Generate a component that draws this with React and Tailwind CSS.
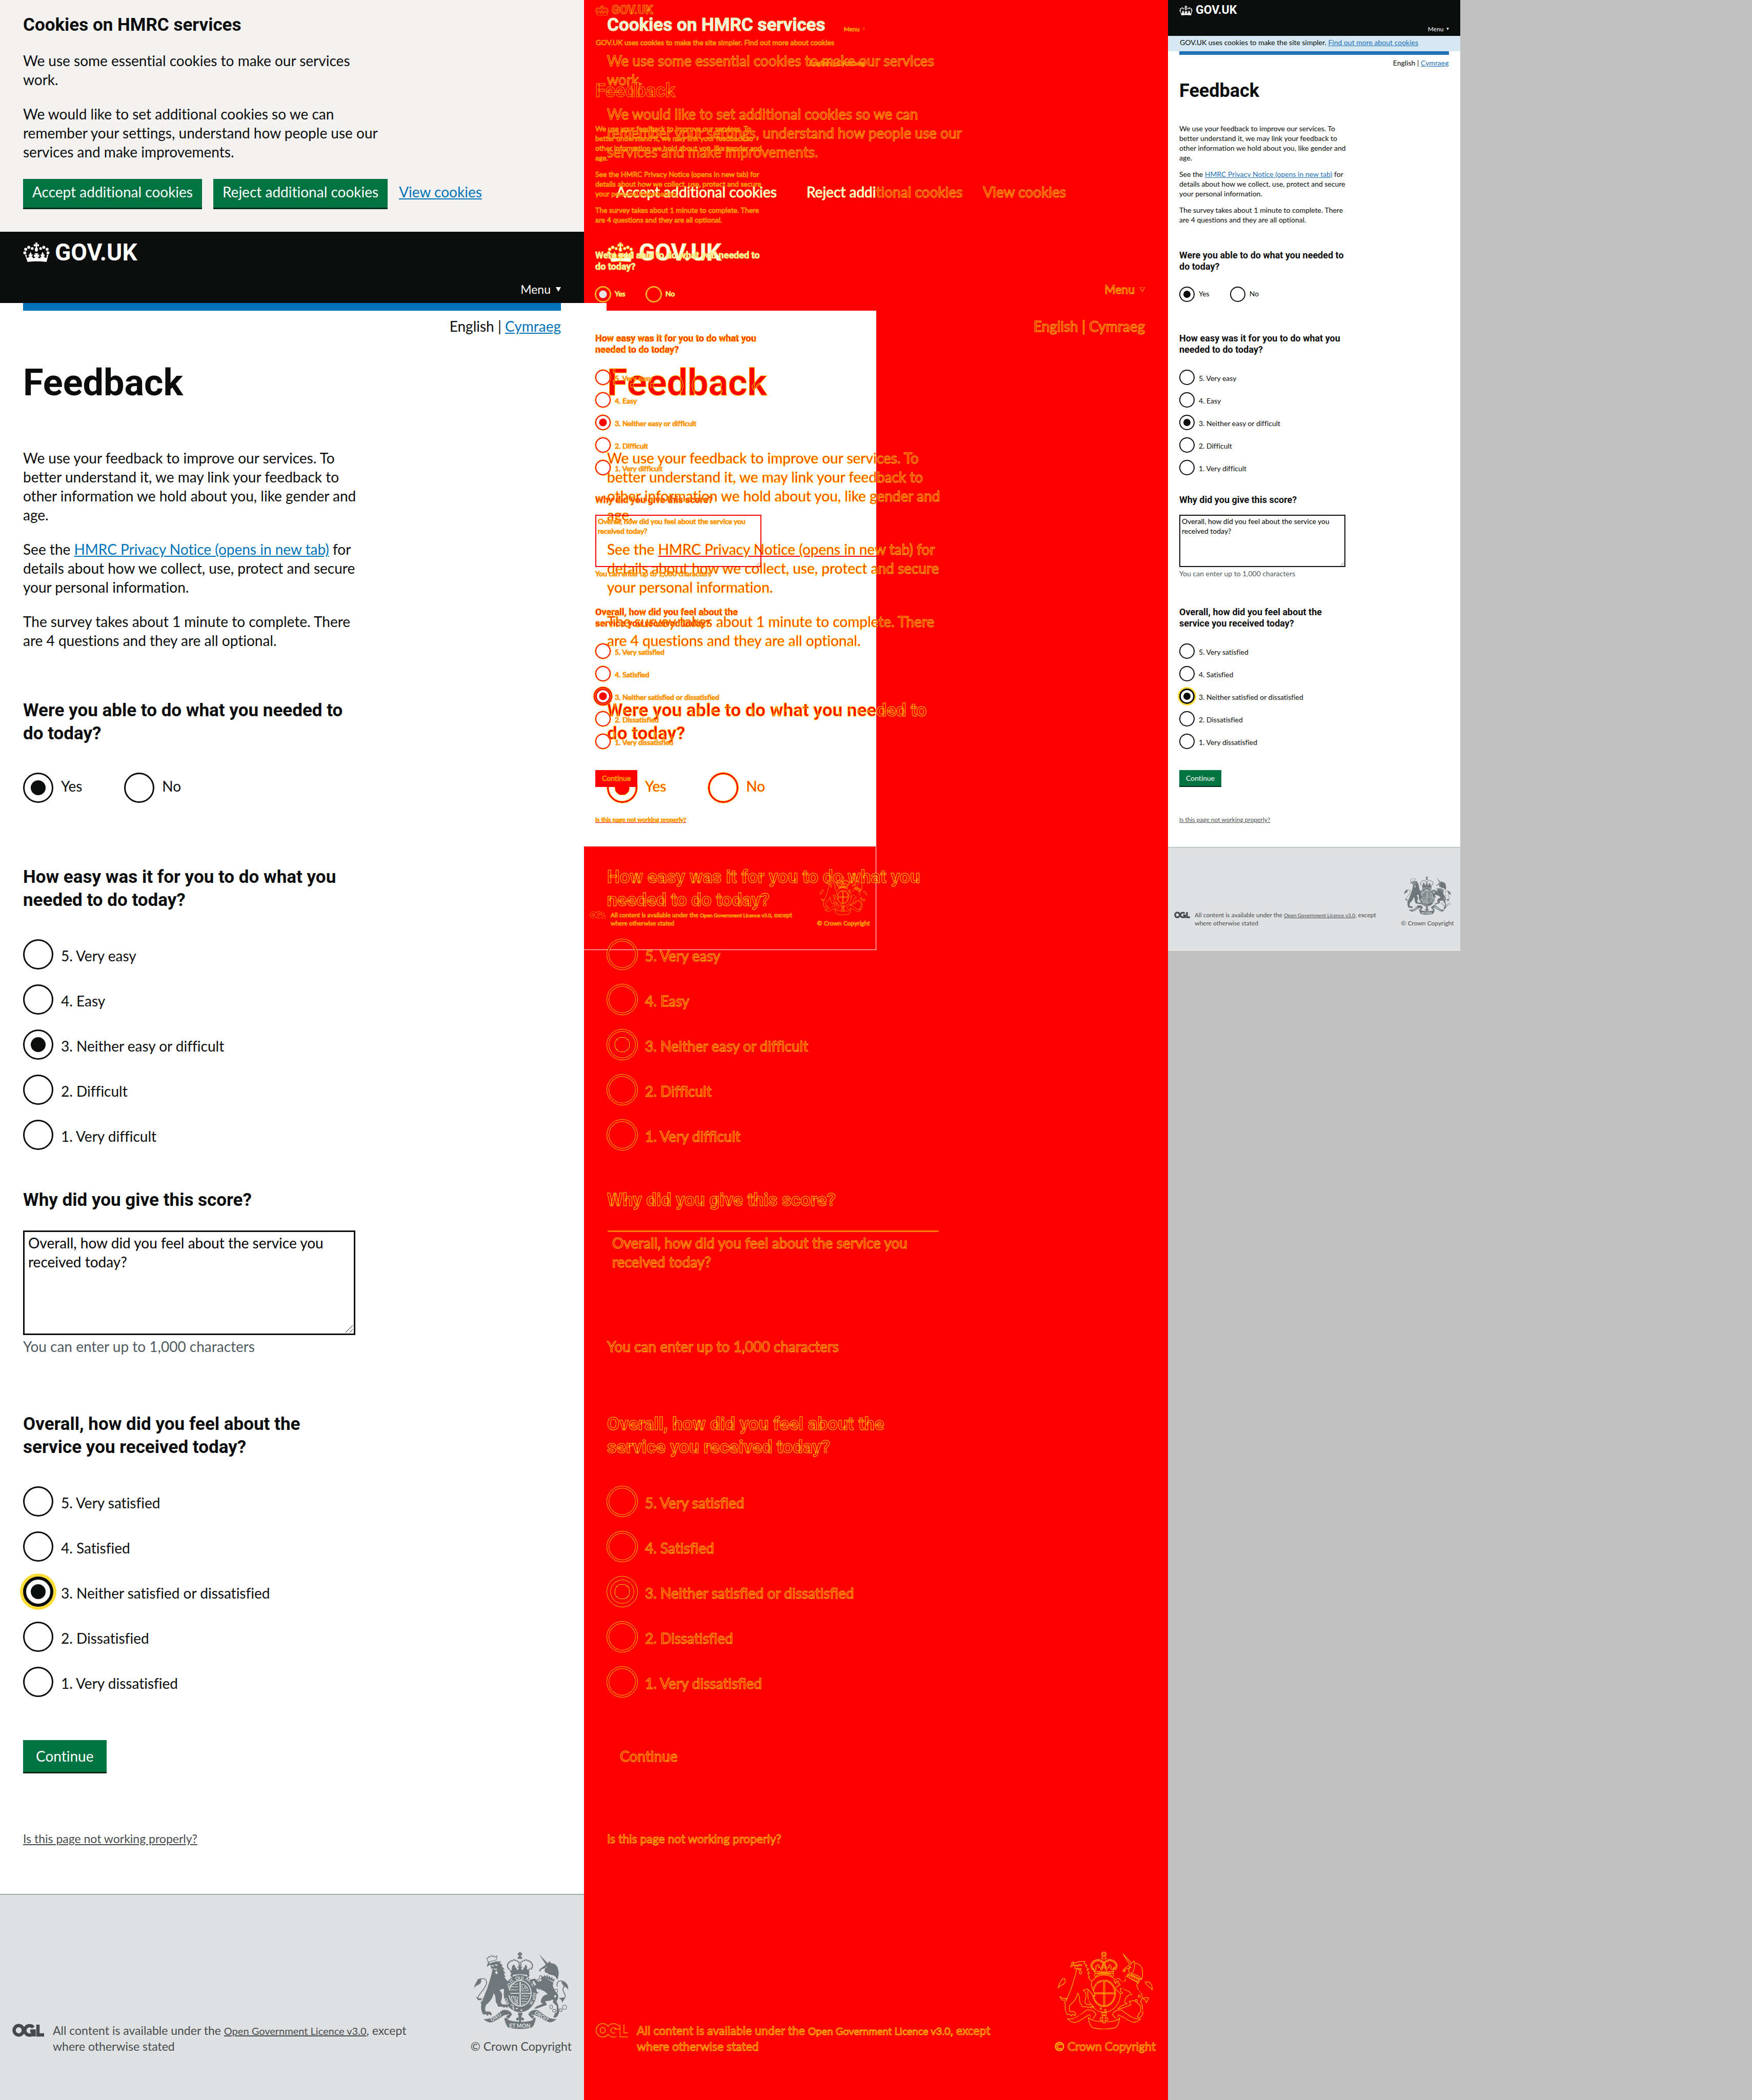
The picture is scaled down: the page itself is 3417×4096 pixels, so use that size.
import { useId } from "react";

/* Sizes of the wide (2x) rendering and of the narrow (1x) rendering of the page. */
const large = {
  gutter: "px-[45px]",
  header: "h-[139px] px-[45px] pt-[12px] pb-[12px]",
  logoRow: "h-[56px] gap-[10px]",
  crown: "w-[52px] h-[38px]",
  logo: "text-[46px] leading-[56px]",
  menu: "text-[23px] leading-[30px] gap-[10px]",
  arrow: "w-[10px] h-[9px]",
  bar: "h-[15px]",
  body: "text-[28px] leading-[37px]",
  lang: "mt-[12px]",
  h1: "text-[72px] leading-[76px] mt-[54px] mb-[90px]",
  paras: "gap-[30px]",
  h2: "text-[35px] leading-[45px]",
  q1: "mt-[95px]",
  q2: "mt-[122px]",
  q3: "mt-[75px]",
  q4: "mt-[110px]",
  options: "mt-[54px]",
  inline: "gap-[82px]",
  stacked: "gap-[29px]",
  label: "gap-[15px]",
  labelUp: "pb-[6px]",
  labelDown: "pt-[6px]",
  radio: "size-[59px]",
  radioIdle: "border-[3px] p-[12px]",
  radioFocus: "border-[6px] p-[9px]",
  area: "mt-[37px] w-[648px] h-[204px]",
  areaBox: "border-[3px] px-[7px] py-[3px]",
  grip: "w-[16px] h-[16px] right-[4px] bottom-[4px]",
  hint: "mt-[4px]",
  cont: "mt-[84px] h-[65px] px-[25px] border-b-[3px]",
  problem: "mt-[112px] mb-[93px] text-[23px] leading-[30px]",
  footer: "border-t-2 px-[24px] pt-[111px] pb-[91px] text-[23px] leading-[30px]",
  ogl: "w-[62px] h-[30px]",
  oglRow: "gap-[17px]",
  footLink: "text-[20px]",
  crest: "w-[185px] h-[151px] mb-[18px]",
};

const small = {
  gutter: "px-[22px]",
  header: "h-[70px] px-[22px] pt-[6px] pb-[6px]",
  logoRow: "h-[28px] gap-[6px]",
  crown: "w-[26px] h-[19px]",
  logo: "text-[23px] leading-[28px]",
  menu: "text-[12px] leading-[15px] gap-[5px]",
  arrow: "w-[5px] h-[5px]",
  bar: "h-[7px]",
  body: "text-[14px] leading-[19px]",
  lang: "mt-[6px]",
  h1: "text-[36px] leading-[38px] mt-[26px] mb-[45px]",
  paras: "gap-[13px]",
  h2: "text-[18px] leading-[22px]",
  q1: "mt-[49px]",
  q2: "mt-[60px]",
  q3: "mt-[37px]",
  q4: "mt-[55px]",
  options: "mt-[28px]",
  inline: "gap-[40px]",
  stacked: "gap-[14px]",
  label: "gap-[8px]",
  labelUp: "pb-[3px]",
  labelDown: "pt-[2px]",
  radio: "size-[30px]",
  radioIdle: "border-2 p-[6px]",
  radioFocus: "border-[3px] p-[5px]",
  area: "mt-[18px] w-[324px] h-[102px]",
  areaBox: "border-2 px-[3px] py-[1px]",
  grip: "w-[8px] h-[8px] right-[2px] bottom-[2px]",
  hint: "mt-[3px]",
  cont: "mt-[41px] h-[33px] px-[13px] border-b-2",
  problem: "mt-[56px] mb-[46px] text-[12px] leading-[15px]",
  footer: "border-t px-[12px] pt-[56px] pb-[45px] text-[12px] leading-[15px]",
  ogl: "w-[31px] h-[15px]",
  oglRow: "gap-[9px]",
  footLink: "text-[10px]",
  crest: "w-[92px] h-[76px] mb-[8px]",
};

const plain = {
  root: "bg-white text-[#0b0c0c]",
  banner: "bg-[#f3f2f1]",
  title: "",
  accept: "bg-[#007343] border-[#002d18] text-white",
  header: "bg-[#0b0c0c] text-white",
  logo: "",
  notice: "bg-[#d5e8f3]",
  first: "",
  hint: "text-[#505a5f]",
  radio: "border-[#0b0c0c] bg-white bg-clip-content checked:bg-[#0b0c0c]",
  area: "border-[#0b0c0c] bg-white text-black",
  cont: "bg-[#007343] border-[#002d18] text-white",
  problem: "text-[#484c4e]",
  footer: "bg-[#dee0e2] border-[#9cafae] text-[#484c4e]",
  ogl: "text-[#454a4d]",
  crest: "text-[#6f777b]",
  cut: "#dee0e2",
};

const largePage = {
  ...plain,
  link: "text-[#0072b8]",
  bar: "bg-[#0072b8]",
  focus: "shadow-[0_0_0_6px_#ffdd38]",
};

const smallPage = {
  ...plain,
  link: "text-[#1d70b8]",
  bar: "bg-[#1f70b8]",
  focus: "shadow-[0_0_0_3px_#ffdd38]",
};

const largeDiff = {
  root: "text-[#ff0000] [-webkit-text-stroke:1px_#ffc400]",
  banner: "",
  title: "text-[#ececec] [-webkit-text-stroke:1px_#ffff9a]",
  accept: "border-transparent text-white [-webkit-text-stroke:1px_#ffff9a]",
  half: "text-[#ff0000] [-webkit-text-stroke:1px_#ffc400]",
  header: "",
  logo: "text-white [-webkit-text-stroke:1px_#ffe060]",
  notice: "",
  first: "",
  hint: "",
  link: "decoration-[#ff0000]",
  bar: "",
  radio:
    "border-[#ff0000] outline-1 outline-[#ffc400] shadow-[inset_0_0_0_1px_#ffc400] checked:bg-[radial-gradient(circle,#ff0000_0_14px,#ffc400_14px_15px,transparent_15px)]",
  focus: "shadow-[inset_0_0_0_1px_#ffc400,0_0_0_5px_#ff0000,0_0_0_6px_#ffc400]",
  area: "border-transparent border-t-[#ff8000]",
  cont: "border-transparent",
  problem: "decoration-[#ff0000]",
  footer: "border-transparent",
  ogl: "text-[#ff0000]",
  crest: "text-[#ff0000] stroke-[#ffb400] [stroke-width:5px]",
  cut: "#ff0000",
  edge: "#ffb800",
};

const smallDiff = {
  ...largeDiff,
  root: "text-[#ff0000] [-webkit-text-stroke:1px_#ff9a00]",
  logo: "text-[#ff0000] [-webkit-text-stroke:1px_#ffb000]",
  first: "text-[#ececec] [-webkit-text-stroke:1px_#ffee60]",
  radio:
    "border-[#ff0000] outline-1 outline-[#ffb000] checked:bg-[radial-gradient(circle,#ff0000_0_7px,transparent_8px)]",
  radioFirst:
    "border-[#ff9a00] outline-1 outline-[#ffff60] checked:bg-[radial-gradient(circle,#e5e5e5_0_7px,transparent_8px)]",
  focus: "shadow-[0_0_0_3px_#ff0000,0_0_0_4px_#ffb000]",
  area: "border-[#ff0000]",
  cont: "border-transparent bg-[#ff0000]",
  crest: "text-[#ff0000] stroke-[#ffa000] [stroke-width:7px]",
};

function Crown({ className, edge }) {
  return (
    <svg
      viewBox="32 35 206 153"
      className={`overflow-visible ${className}`}
      fill="currentColor"
      stroke={edge ?? "none"}
      strokeWidth="5"
      aria-hidden="true"
    >
      <circle cx="44" cy="116" r="12" />
      <circle cx="51" cy="88" r="11.5" />
      <circle cx="75" cy="73" r="11.5" />
      <circle cx="102" cy="82" r="10.5" />
      <circle cx="168" cy="82" r="10.5" />
      <circle cx="193" cy="73" r="11.5" />
      <circle cx="219" cy="88" r="11.5" />
      <circle cx="226" cy="116" r="12" />
      <path d="M125 36h19l-4 15 15-4v19l-15-4 2 15c8 5 7 30-7 30s-16-25-7-30l2-15-16 4V47l15 4z" />
      <path d="M120 120h30l-7 14 14-6v22l-12-5c2 9 9 15 18 13 5-1 6-6 3-11 6 2 9-1 8-8-5 2-8-1-7-6 2-5 7-6 11-3-3-9 2-14 6-22 4 8 9 13 6 22 5-3 10-2 11 3 1 5-2 8-7 6-1 7 2 10 8 8-3 9 3 11 9 8 7-4 4-15 5-23l13-2-14 57c-47-6-103-6-150 0L45 130l13 2c1 8-2 19 5 23 6 3 12 1 9-8 6 2 9-1 8-8-5 2-8-1-7-6 1-5 6-6 11-3-3-9 2-14 5-22 4 8 9 13 6 22 5-3 10-2 11 3 1 5-2 8-7 6-1 7 2 10 8 8-3 5-2 10 3 11 9 2 16-4 18-13l-12 5v-22l14 6z" />
    </svg>
  );
}

function Crest({ className, cut }) {
  const beads = [
    [332, 92], [347, 87], [362, 90], [377, 97], [318, 98], [307, 107], [299, 119], [296, 132], [299, 146], [306, 158],
    [414, 97], [429, 90], [444, 87], [459, 92], [473, 98], [484, 107], [492, 119], [495, 132], [492, 146], [485, 158],
  ];
  return (
    <svg viewBox="28 22 754 616" className={className} fill="currentColor" role="img" aria-label="Royal coat of arms">
      <path d="M385 24h20l-4 11 11-4v19l-11-4 4 12h-20l4-12-11 4V31l11 4z" />
      <path d="M376 78c0-28 38-28 38 0zM384 100h8v34h-8zM398 100h8v34h-8z" />
      {beads.map(([x, y]) => (
        <circle key={`${x}-${y}`} cx={x} cy={y} r="6.5" />
      ))}
      <path d="M305 150l18 22 12-14-8-2 6-12-4-6 20-16 8 14-4 10 8-4 14 28 14-22-12 4v-14l12 4-5-12h22l-5 12 12-4v14l-12-4 14 22 14-28 8 4-4-10 8-14 8 14 6 6-8 10 12 14 20-24-17 46H323z" />
      <path d="M318 180h156l-8 14H326zM326 196c40-12 102-12 140 0 10 8 4 20-4 28l-12-4c6-8 6-12 0-14-34-8-76-8-108 0-6 2-6 8 0 14l-12 4c-10-8-14-20-4-28z" />
      <ellipse cx="396" cy="354" rx="130" ry="148" />
      <ellipse cx="396" cy="352" rx="92" ry="106" fill={cut} />
      <ellipse cx="396" cy="352" rx="84" ry="98" />
      <path d="M392 262v188h10V262zM310 348h170v8H310z" fill={cut} />
      <g fill="none" stroke={cut} strokeWidth="5" strokeLinecap="round">
        <path d="M336 280c14-8 24 8 42-4M328 302c18-10 28 8 50-4M322 326c18-10 34 8 56-4M412 280c26 2 44 26 50 52h-50zM424 318c6-18 14-8 12-26M436 318c12-4 2-16 16-12M326 376c4 34 24 58 52 64-2-20-4-34 0-58zM344 384l22 46M358 384l12 36M412 374c20-8 34 8 52-2M410 396c18-8 34 8 50-2M410 418c14-6 22 6 38-2M410 438c10-4 12 2 20-2" />
      </g>
      <g fill={cut} stroke="none" className="font-bold [-webkit-text-stroke:0px_transparent]" fontSize="36" fontFamily="Lato, sans-serif">
        <text transform="translate(306 322) rotate(-66)">SO</text>
        <text transform="translate(326 276) rotate(-42)">IT</text>
        <text x="358" y="246">QUI</text>
        <text transform="translate(438 244) rotate(32)">MA</text>
        <text transform="translate(482 280) rotate(58)">LY</text>
        <text transform="translate(498 346) rotate(94)" fontSize="30">PEN</text>
        <text transform="translate(486 408) rotate(122)" fontSize="30">SE</text>
        <text transform="translate(310 436) rotate(-112)" fontSize="34">HO</text>
      </g>
      <circle cx="370" cy="474" r="7" fill={cut} />
      <circle cx="406" cy="486" r="7" fill={cut} />
      <path d="M322 448c18-14 28 12 14 20 14 0 16 18 0 18" fill="none" stroke={cut} strokeWidth="6" />
      {/* lion */}
      <path d="M132 72l10 32 66-18 4-30-12 8-10-10-10 8-12-12-10 14-12-4-4 12z" fill="none" stroke="currentColor" strokeWidth="7" strokeDasharray="8 3" />
      <path d="M130 142l14-8 8-20 54-16 38 0-8 16 24 14-12 6 26 28-16 0 22 30-14 0 14 30-10 2 28 34-4 26 10 32c8 14 18 40 20 60l-24-14c-10-18-22-34-40-46l-30 12c26 16 26 42 20 66-4 20-14 30 6 46l40 2 18 18-16-4-2 14-16-12-10 10-16-10-32 0c-6-14-10-26-18-32-4-30 0-56-18-76-6 34-26 66-54 88-14 14-16 38-10 58l36 2 14 18-8 14-16-12-12 14-14-14-18 4c-20-28-20-60-16-88l-8-8 14-12 22-54 20-50c12-40 22-70 34-114l8-42-14 2c2-12 0-20-6-30l-12 4 6-26-10 0z" />
      <path d="M160 130l18 8 14-4-10-6zM192 124l14 10 14-6-10-6zM182 150l16 8 16-2-4 10-16 0z" fill={cut} />
      <ellipse cx="208" cy="187" rx="9" ry="12" fill={cut} />
      <path d="M58 284C48 264 62 240 90 236c36-6 46 22 36 48-14 40-56 68-66 104-2 8 4 14 10 16" fill="none" stroke="currentColor" strokeWidth="7" />
      <path d="M30 312c4-34 18-44 32-74l22-2c10 26-6 44-24 50-14 6-24 12-30 26zM44 378l24 14 30 0-16 16-22-4z" />
      {/* unicorn */}
      <path d="M546 38l72 78-14 12z" />
      <path d="M558 156l32-24 20-14 24-24 4 18 34 10 20 28-6 4 18 30-8 4 2 52-14-30-20-10-66-12-8-18 8-18-24 6-14 8 4 12-10-6-2 8-6-10z" />
      <path d="M640 112c36 2 60 26 60 58 6 24 4 50-10 74-6-20-16-30-30-34l-44-12c14-14 22-40 24-86z" />
      <path d="M586 196l96 42-12 34-92-48z" fill={cut} />
      <path d="M590 206l12 14 10-16 8 22 12-16 6 24 14-14 4 22 16-8-6 26-84-38z" />
      <path d="M566 212l96 54-6 26 20 44 22 26c4 20 0 38-12 54l14 30 6 64-14 26-18 10-14-4 16-34 12-6 0-50c-20-12-30-28-40-44-22 4-36 6-52 8l14 28-60 22-24 8-20 0 24-20 48-20-18-10c4-36 20-60 56-62-14-20-26-28-40-32l-28-14-20-4-2 22 18 16-18 6-34-34-2-16 34-24-18-30-16 10-2 12-14-20 14-14 26-6 28 28 24-10z" />
      <ellipse cx="676" cy="376" rx="8" ry="10" fill={cut} />
      <ellipse cx="652" cy="412" rx="8" ry="10" fill={cut} />
      <path d="M596 140l14 2-6 8z" fill={cut} />
      <path d="M692 298c-8-30 8-50 36-44 24 6 34 16 28 40-14 2-24 24-16 42 14 24 30 54-6 60" fill="none" stroke="currentColor" strokeWidth="7" />
      <path d="M724 262c34-8 56 14 56 64-12-28-44-24-56-64zM704 392l36-8 12 8-20 34-8-22z" />
      <g fill="none" stroke="currentColor" strokeWidth="5">
        <ellipse cx="560" cy="224" rx="10" ry="13" />
        <ellipse cx="540" cy="252" rx="9" ry="12" />
        <ellipse cx="548" cy="306" rx="12" ry="14" />
        <ellipse cx="684" cy="332" rx="11" ry="14" />
        <ellipse cx="644" cy="460" rx="11" ry="14" />
        <ellipse cx="668" cy="490" rx="13" ry="11" />
        <ellipse cx="718" cy="486" rx="13" ry="11" />
        <circle cx="750" cy="463" r="17" />
      </g>
      {/* motto */}
      <path d="M106 556c60 6 96-32 150-70 46-8 70 14 76 36l-40 50-16-20c10-10 18-20 10-30-34 8-76 50-116 62-30 2-46-12-64-28zM686 556c-60 6-96-32-150-70-46-8-66 14-74 36l44 48 16-20c-16-8-22-16-16-26 34 6 80 46 120 58 30 2 42-10 60-26z" />
      <path d="M270 548c4 24 14 60 32 76 56 16 128 16 188 0 18-16 26-46 30-70-50 34-190 34-250-6z" />
      <path d="M308 520c-14 4-26 12-26 22 50 38 176 38 232 0-4-10-14-18-28-20" fill="none" stroke={cut} strokeWidth="5" />
      <path d="M380 506h34v22h-34zM396 520c18 14 14 28 6 36 10-20 30-8 24 8-6 10-16 4-16-2l-8 8 6 14-12 6-12-6 6-14-8-8c0 6-10 12-16 2-6-16 14-28 24-8-8-8-12-22 6-36z" />
      <g fill={cut} stroke="none" className="font-bold [-webkit-text-stroke:0px_transparent]" fontFamily="Lato, sans-serif">
        <text transform="translate(170 578) rotate(-32)" fontSize="40">DIEU</text>
        <text x="310" y="624" fontSize="43">ET MON</text>
        <text transform="translate(508 514) rotate(32)" fontSize="40">DROIT</text>
      </g>
    </svg>
  );
}

function OglShape(props) {
  return (
    <g fill="none" {...props}>
      <ellipse cx="12.5" cy="15" rx="9" ry="9.2" />
      <path d="M41 9.5A9.3 9.2 0 1 0 41 21M35 16.5h7.5V27" />
      <path d="M50 4v20h12" />
    </g>
  );
}

function Ogl({ className, edge }) {
  return (
    <svg viewBox="0 0 62 30" className={`overflow-visible ${className}`} role="img" aria-label="Open Government Licence">
      {edge && <OglShape stroke={edge} strokeWidth="9" />}
      <OglShape stroke="currentColor" strokeWidth="6.5" />
    </svg>
  );
}

function Question({ s, t, className, title, options, checked, focused, inline, first }) {
  const name = useId();
  return (
    <fieldset className={`${className} ${first ? t.first : ""}`}>
      <legend className={`font-["Roboto",sans-serif] font-bold ${s.h2}`}>{title}</legend>
      <div className={`flex ${s.options} ${inline ? s.inline : `flex-col ${s.stacked}`}`}>
        {options.map((option) => {
          const isFocused = focused && option === checked;
          return (
            <label key={option} className={`flex items-center ${s.label}`}>
              <input
                type="radio"
                name={name}
                defaultChecked={option === checked}
                className={`appearance-none shrink-0 rounded-full ${s.radio} ${isFocused ? s.radioFocus : s.radioIdle} ${
                  first && t.radioFirst ? t.radioFirst : t.radio
                } ${isFocused ? t.focus : ""}`}
              />
              <span className={inline ? s.labelUp : s.labelDown}>{option}</span>
            </label>
          );
        })}
      </div>
    </fieldset>
  );
}

function CookieBanner({ t }) {
  const button = "h-[59px] px-[18px] pb-[5px] border-b-[3px]";
  return (
    <section className={`px-[45px] pt-[27px] pb-[44px] ${t.banner}`}>
      <h2 className={`font-["Roboto",sans-serif] text-[35px] leading-[44px] font-bold ${t.title}`}>Cookies on HMRC services</h2>
      <p className="mt-[29px]">
        We use some essential cookies to make our services
        <br />
        work.
      </p>
      <p className="mt-[30px]">
        We would like to set additional cookies so we can
        <br />
        remember your settings, understand how people use our
        <br />
        services and make improvements.
      </p>
      <div className="mt-[34px] flex gap-[22px]">
        <button type="button" className={`${button} ${t.accept}`}>
          Accept additional cookies
        </button>
        <button type="button" className={`${button} ${t.accept}`}>
          Reject addi<span className={t.half}>tional cookies</span>
        </button>
        <a href="#cookies" className={`pt-[7px] underline ${t.link}`}>
          View cookies
        </a>
      </div>
    </section>
  );
}

function CookieNotice({ t }) {
  return (
    <p className={`h-[30px] px-[23px] pt-[3px] ${t.notice}`}>
      GOV.UK uses cookies to make the site simpler.{" "}
      <a href="#cookies" className={`underline ${t.link}`}>
        Find out more about cookies
      </a>
    </p>
  );
}

function Page({ s, t }) {
  const isLarge = s === large;
  const comment = useId();
  return (
    <div className={`flex flex-col font-["Lato",sans-serif] [font-variant-ligatures:none] ${s.body} ${t.root}`}>
      {isLarge && <CookieBanner t={t} />}
      <header className={`flex flex-col justify-between ${s.header} ${t.header}`}>
        <a href="#home" className={`flex items-center ${s.logoRow} ${t.logo}`}>
          <Crown className={s.crown} edge={t.edge} />
          <span className={`font-["Roboto",sans-serif] font-bold ${s.logo}`}>GOV.UK</span>
        </a>
        <button type="button" className={`flex items-center self-end ${s.menu}`}>
          Menu
          <svg viewBox="0 0 10 9" className={s.arrow} fill="currentColor" stroke={t.edge ?? "none"} aria-hidden="true">
            <path d="M0 0h10L5 9z" />
          </svg>
        </button>
      </header>
      {!isLarge && <CookieNotice t={t} />}
      <main className={`flex flex-col ${s.gutter}`}>
        <div className={`${s.bar} ${t.bar}`} />
        <nav className={`text-right ${s.lang}`}>
          English |{" "}
          <a href="#cy" className={`underline ${t.link}`}>
            Cymraeg
          </a>
        </nav>
        <h1 className={`font-["Roboto",sans-serif] font-bold ${s.h1}`}>Feedback</h1>
        <div className={`flex flex-col ${s.paras}`}>
          <p>
            We use your feedback to improve our services. To
            <br />
            better understand it, we may link your feedback to
            <br />
            other information we hold about you, like gender and
            <br />
            age.
          </p>
          <p>
            See the{" "}
            <a href="#privacy" className={`underline ${t.link}`}>
              HMRC Privacy Notice (opens in new tab)
            </a>{" "}
            for
            <br />
            details about how we collect, use, protect and secure
            <br />
            your personal information.
          </p>
          <p>
            The survey takes about 1 minute to complete. There
            <br />
            are 4 questions and they are all optional.
          </p>
        </div>
        <form className="flex flex-col items-start">
          <Question
            s={s}
            t={t}
            inline
            first
            className={s.q1}
            title={<>Were you able to do what you needed to<br />do today?</>}
            options={["Yes", "No"]}
            checked="Yes"
          />
          <Question
            s={s}
            t={t}
            className={s.q2}
            title={<>How easy was it for you to do what you<br />needed to do today?</>}
            options={["5. Very easy", "4. Easy", "3. Neither easy or difficult", "2. Difficult", "1. Very difficult"]}
            checked="3. Neither easy or difficult"
          />
          <label htmlFor={comment} className={`font-["Roboto",sans-serif] font-bold ${s.h2} ${s.q3}`}>
            Why did you give this score?
          </label>
          <div className={`relative ${s.area}`}>
            <textarea
              id={comment}
              className={`block size-full resize-none overflow-hidden ${s.areaBox} ${t.area}`}
              defaultValue={"Overall, how did you feel about the service you\nreceived today?"}
            />
            <svg viewBox="0 0 16 16" className={`absolute ${s.grip}`} stroke="currentColor" fill="none" aria-hidden="true">
              <path d="M1 15L15 1M9 15l6-6" />
            </svg>
          </div>
          <p className={`${s.hint} ${t.hint}`}>You can enter up to 1,000 characters</p>
          <Question
            s={s}
            t={t}
            focused
            className={s.q4}
            title={<>Overall, how did you feel about the<br />service you received today?</>}
            options={[
              "5. Very satisfied",
              "4. Satisfied",
              "3. Neither satisfied or dissatisfied",
              "2. Dissatisfied",
              "1. Very dissatisfied",
            ]}
            checked="3. Neither satisfied or dissatisfied"
          />
          <button type="submit" className={`${s.cont} ${t.cont}`}>
            Continue
          </button>
        </form>
        <a href="#problem" className={`self-start underline ${s.problem} ${t.problem}`}>
          Is this page not working properly?
        </a>
      </main>
      <footer className={`flex items-end justify-between ${s.footer} ${t.footer}`}>
        <div className={`flex items-start ${s.oglRow}`}>
          <Ogl className={`${s.ogl} ${t.ogl}`} edge={t.edge} />
          <p>
            All content is available under the{" "}
            <a href="#ogl" className={`underline ${s.footLink} ${t.edge ? t.link : ""}`}>
              Open Government Licence v3.0
            </a>
            , except
            <br />
            where otherwise stated
          </p>
        </div>
        <div className="flex flex-col items-center">
          <Crest className={`${s.crest} ${t.crest}`} cut={t.cut} />
          <a href="#copyright">© Crown Copyright</a>
        </div>
      </footer>
    </div>
  );
}

/* Areas of the comparison in which both renderings are white. */
function SharedWhite() {
  return (
    <div className="bg-[#ff0000]">
      <div className="h-[591px]" />
      <div className="h-[15px] w-[44px] bg-white" />
      <div className="h-[1045px] w-1/2 bg-white" />
      <div className="h-[202px] w-1/2 border-r border-b border-white" />
    </div>
  );
}

export default function App() {
  return (
    <div className="grid min-h-screen grid-cols-3 bg-[#c0c0c0]">
      <Page s={large} t={largePage} />
      <div className="grid overflow-hidden *:[grid-area:1/1]">
        <SharedWhite />
        <Page s={large} t={largeDiff} />
        <div className="w-1/2">
          <Page s={small} t={smallDiff} />
        </div>
      </div>
      <div className="w-1/2">
        <div className="border-b border-white">
          <Page s={small} t={smallPage} />
        </div>
      </div>
    </div>
  );
}
